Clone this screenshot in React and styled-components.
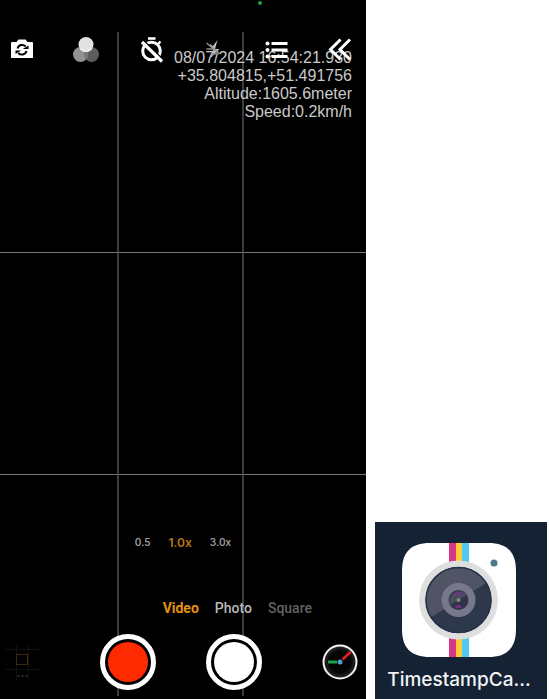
import React, { useState } from "react";
import styled, { createGlobalStyle } from "styled-components";

const GlobalStyle = createGlobalStyle`
  * { box-sizing: border-box; }
  body { margin: 0; background: #fff; font-family: Inter, Roboto, sans-serif; }
  button { border: 0; padding: 0; background: none; color: inherit; font: inherit; cursor: pointer; }
  svg { display: block; }
`;

const Page = styled.main`
  display: grid;
  grid-template-columns: 2fr 1fr;
  min-height: 100vh;
  background: #fff;
`;

const Phone = styled.section`
  position: relative;
  display: flex;
  flex-direction: column;
  background: #000;
  color: #fff;
`;

const PrivacyDot = styled.span`
  position: absolute;
  top: 1px;
  left: 71%;
  width: 4px;
  height: 4px;
  border-radius: 50%;
  background: #21a33f;
  margin-left: -2px;
`;

const ThirdsGrid = styled.div`
  position: absolute;
  inset: 32px 0 3px;
  display: grid;
  grid-template-columns: 119fr 125fr 122fr;
  grid-template-rows: 221fr 222fr 221fr;
  pointer-events: none;
`;

const ThirdsCell = styled.div`
  border-right: ${(p) => (p.$last ? "0" : "2px solid #3c3c3c")};
  border-bottom: ${(p) => (p.$bottom ? "0" : "1px solid #767676")};
`;

const Toolbar = styled.nav`
  position: relative;
  display: flex;
  justify-content: space-between;
  padding: 34px 11px 0 7px;
`;

const ToolButton = styled.button`
  width: 30px;
  height: 30px;
`;

const Stamp = styled.div`
  position: absolute;
  top: 49px;
  right: 14px;
  color: #cacaca;
  font: 16px/18px "Liberation Sans", Arial, sans-serif;
  text-align: right;
  white-space: nowrap;
  pointer-events: none;
`;

const Spacer = styled.div`
  flex: 1;
`;

const ZoomBar = styled.div`
  position: relative;
  display: flex;
  align-items: center;
  justify-content: center;
  gap: 18px;
  height: 20px;
  margin-bottom: 46px;
`;

const ZoomButton = styled.button`
  font-size: ${(p) => (p.$active ? "12px" : "10px")};
  font-weight: 600;
  color: ${(p) => (p.$active ? "#b87812" : "#9b9b9b")};
`;

const ModeBar = styled.div`
  position: relative;
  display: flex;
  align-items: center;
  justify-content: flex-end;
  gap: 16px;
  height: 20px;
  margin-bottom: 16px;
  padding-right: 54px;
`;

const ModeButton = styled.button`
  font-family: Roboto, sans-serif;
  font-size: 14px;
  font-weight: ${(p) => p.$weight};
  color: ${(p) => p.$tone};
`;

const ActionBar = styled.div`
  position: relative;
  display: grid;
  grid-template-columns: 75fr 106fr 106fr 79fr;
  align-items: center;
  justify-items: center;
  padding-bottom: 9px;
`;

const GridButton = styled.button`
  justify-self: start;
  margin-left: 3px;
`;

const CompassButton = styled.button`
  justify-self: end;
  margin-right: 8px;
`;

const Shutter = styled.button`
  display: grid;
  place-items: center;
  width: 56px;
  height: 56px;
  border-radius: 50%;
  border: 5px solid #fff;
  background: #000;

  &::before {
    content: "";
    width: 40px;
    height: 40px;
    border-radius: 50%;
    background: ${(p) => p.$fill};
  }
`;

const Side = styled.aside`
  display: flex;
  flex-direction: column;
  justify-content: flex-end;
  padding: 0 2px 0 9px;
`;

const AppTile = styled.a`
  display: flex;
  flex-direction: column;
  align-items: center;
  padding: 21px 4px 7px 0;
  background: #142234;
  color: #f1f3f6;
  text-decoration: none;
`;

const AppName = styled.span`
  margin-top: 10px;
  font-size: 19px;
  line-height: 25px;
  font-weight: 500;
  white-space: nowrap;
`;

const SwitchCameraIcon = () => (
  <svg width="30" height="30" viewBox="0 0 30 30" aria-hidden="true">
    <path d="M5 8h4.500l2-2.500h7l2 2.500H25a1 1 0 0 1 1 1v15H4V9a1 1 0 0 1 1-1z" fill="#fff" />
    <g fill="none" stroke="#000" strokeWidth="2">
      <path d="M10.500 14.500a4.800 4.800 0 0 1 8.200-2" />
      <path d="M19.500 17a4.800 4.800 0 0 1-8.200 2" />
    </g>
    <path d="M15.800 15h5.700V11.500zM8.500 16.500h5.700L8.500 20z" fill="#000" />
  </svg>
);

const FiltersIcon = () => (
  <svg width="30" height="30" viewBox="0 0 30 30" aria-hidden="true">
    <circle cx="20.500" cy="20.500" r="7.500" fill="#5d5d5d" />
    <circle cx="9.500" cy="20.500" r="7.500" fill="#929292" />
    <path d="M15 15.400a7.500 7.500 0 0 1 0 10.200a7.500 7.500 0 0 1 0-10.200z" fill="#777" />
    <circle cx="15" cy="10.500" r="7.500" fill="#e2e2e2" />
    <path d="M8.500 14.200a7.500 7.500 0 0 1 7 3.800a7.500 7.500 0 0 1-7-3.800z" fill="#f2f2f2" />
    <path d="M21.500 14.200a7.500 7.500 0 0 0-7 3.800a7.500 7.500 0 0 0 7-3.800z" fill="#efefef" />
  </svg>
);

const TimerOffIcon = () => (
  <svg width="30" height="30" viewBox="0 0 30 30" aria-hidden="true">
    <g fill="none" stroke="#fff">
      <circle cx="17.500" cy="17" r="8.800" strokeWidth="3" />
      <path d="M14 4.500h7.500" strokeWidth="2.600" />
      <path d="M24 10l2.500-2.500" strokeWidth="2.400" />
      <path d="M10 6.500l18.500 18.500" stroke="#000" strokeWidth="1.500" />
      <path d="M8 8l20 19.500" strokeWidth="3.200" />
    </g>
  </svg>
);

const FlashOffIcon = () => (
  <svg width="30" height="30" viewBox="0 0 30 30" aria-hidden="true">
    <path d="M19.500 6L13 14.500h2.500L12 24.500L21.500 15h-4.500z" fill="#bdbdbd" />
    <path d="M8.500 15h7M8.500 9l13 11M12.500 20h7" stroke="#8c8c8c" strokeWidth="1.500" />
    <path d="M12 10.500l4 3.500" stroke="#aaa" strokeWidth="1.500" />
  </svg>
);

const ListIcon = () => (
  <svg width="30" height="30" viewBox="0 0 30 30" aria-hidden="true">
    <g fill="#fff">
      <circle cx="6.500" cy="9.500" r="2" />
      <circle cx="6.500" cy="16" r="2" />
      <circle cx="6.500" cy="22.500" r="2" />
    </g>
    <path d="M10.500 9.500h16M10.500 16h16M10.500 22.500h16" stroke="#fff" strokeWidth="3" />
  </svg>
);

const CollapseIcon = () => (
  <svg width="30" height="30" viewBox="0 0 30 30" aria-hidden="true">
    <path d="M15.500 5.500L5.500 15.500l10 10M25 5.500L15 15.500l10 10" fill="none" stroke="#fff" strokeWidth="3" />
  </svg>
);

const FrameIcon = () => (
  <svg width="38" height="38" viewBox="0 0 38 38" aria-hidden="true">
    <path d="M2 6.500h35M2 26.500h35M13.500 2v35M25.500 2v35" stroke="#101010" fill="none" />
    <rect x="13.500" y="11.500" width="11" height="10" fill="none" stroke="#3a2b08" />
    <path d="M14.500 33h2M22.500 33h2" stroke="#2a2a2a" strokeWidth="2" />
    <path d="M18.500 33h2" stroke="#3d2c05" strokeWidth="2" />
  </svg>
);

const CompassIcon = () => (
  <svg width="36" height="36" viewBox="0 0 36 36" aria-hidden="true">
    <defs>
      <radialGradient id="dial">
        <stop offset="0" stopColor="#000" />
        <stop offset="0.650" stopColor="#050505" />
        <stop offset="1" stopColor="#303030" />
      </radialGradient>
    </defs>
    <circle cx="18" cy="18" r="16.500" fill="url(#dial)" stroke="#f4f4f4" strokeWidth="2" />
    <path d="M6 18h9" stroke="#20a348" strokeWidth="3" />
    <path d="M20.500 15.500L28.500 8" stroke="#ed1c24" strokeWidth="2.500" />
    <circle cx="18" cy="18" r="2.500" fill="#5b9bd5" />
  </svg>
);

const AppIcon = () => (
  <svg width="114" height="114" viewBox="0 0 114 114" aria-hidden="true">
    <defs>
      <clipPath id="lens"><circle cx="56.500" cy="57" r="32.500" /></clipPath>
    </defs>
    <path d="M28 0H86C105 0 114 9 114 28V86C114 105 105 114 86 114H28C9 114 0 105 0 86V28C0 9 9 0 28 0Z" fill="#fff" />
    <path d="M47 0h7v114h-7z" fill="#d93886" />
    <path d="M54 0h6v114h-6z" fill="#fecb35" />
    <path d="M60 0h7v114h-7z" fill="#53c7f5" />
    <circle cx="56.500" cy="57" r="39.500" fill="#dedede" />
    <circle cx="56.500" cy="57" r="33" fill="#2e384c" />
    <path d="M20 80L94 34V10H10V80z" fill="#505465" clipPath="url(#lens)" />
    <circle cx="56.500" cy="57" r="32.500" fill="none" stroke="#263044" strokeWidth="1.500" />
    <circle cx="56.500" cy="57" r="17" fill="#77788c" />
    <circle cx="56.500" cy="57" r="10" fill="#303548" />
    <path d="M48 62L65 52A10 10 0 0 0 48 62z" fill="#4a4d5b" />
    <ellipse cx="56.500" cy="50.500" rx="3" ry="1.500" fill="#71338a" />
    <ellipse cx="56.500" cy="63.500" rx="3" ry="1.500" fill="#71338a" />
    <circle cx="56.500" cy="57" r="2" fill="#858491" />
    <circle cx="92" cy="20" r="3.500" fill="#4e7788" />
  </svg>
);

const TOOLS = [
  ["Switch camera", SwitchCameraIcon],
  ["Filters", FiltersIcon],
  ["Timer off", TimerOffIcon],
  ["Flash off", FlashOffIcon],
  ["Settings list", ListIcon],
  ["Collapse toolbar", CollapseIcon],
];

const ZOOMS = ["0.5", "1.0x", "3.0x"];

const MODES = [
  ["Video", "#e69110", 700],
  ["Photo", "#b9b9b9", 500],
  ["Square", "#626262", 500],
];

export default function App() {
  const [zoom, setZoom] = useState("1.0x");

  return (
    <>
      <GlobalStyle />
      <Page>
        <Phone>
          <PrivacyDot />
          <ThirdsGrid>
            {Array.from({ length: 9 }, (_, i) => (
              <ThirdsCell key={i} $last={i % 3 === 2} $bottom={i > 5} />
            ))}
          </ThirdsGrid>
          <Stamp>
            <div>08/07/2024 16:54:21.930</div>
            <div>+35.804815,+51.491756</div>
            <div>Altitude:1605.6meter</div>
            <div>Speed:0.2km/h</div>
          </Stamp>
          <Toolbar>
            {TOOLS.map(([label, Icon]) => (
              <ToolButton key={label} aria-label={label}><Icon /></ToolButton>
            ))}
          </Toolbar>
          <Spacer />
          <ZoomBar>
            {ZOOMS.map((z) => (
              <ZoomButton key={z} $active={z === zoom} onClick={() => setZoom(z)}>{z}</ZoomButton>
            ))}
          </ZoomBar>
          <ModeBar>
            {MODES.map(([name, tone, weight]) => (
              <ModeButton key={name} $tone={tone} $weight={weight}>{name}</ModeButton>
            ))}
          </ModeBar>
          <ActionBar>
            <GridButton aria-label="Grid"><FrameIcon /></GridButton>
            <Shutter aria-label="Record video" $fill="#ff2a00" />
            <Shutter aria-label="Take photo" $fill="#fff" />
            <CompassButton aria-label="Compass"><CompassIcon /></CompassButton>
          </ActionBar>
        </Phone>
        <Side>
          <AppTile href="#app">
            <AppIcon />
            <AppName>TimestampCa...</AppName>
          </AppTile>
        </Side>
      </Page>
    </>
  );
}
